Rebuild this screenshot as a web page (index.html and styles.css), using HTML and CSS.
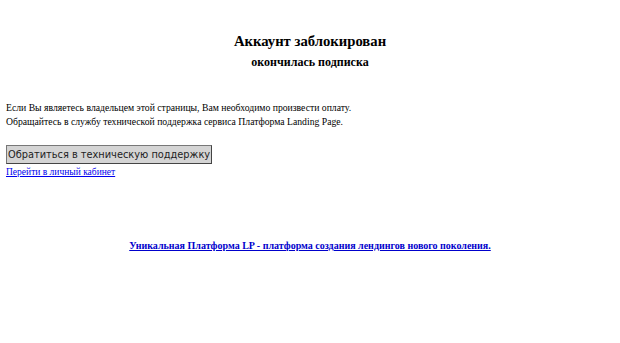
FILE: index.html
```html
<!DOCTYPE html>
<html>
<head>
<meta charset="utf-8">
<link rel="stylesheet" href="styles.css">
</head>
<body>
<div class="page">
  <h1 class="title">Аккаунт заблокирован</h1>
  <h2 class="subtitle">окончилась подписка</h2>
  <p class="text">Если Вы являетесь владельцем этой страницы, Вам необходимо произвести оплату.<br>Обращайтесь в службу технической поддержка сервиса Платформа Landing Page.</p>
  <button class="btn" type="button">Обратиться в техническую поддержку</button>
  <a class="cabinet" href="#">Перейти в личный кабинет</a>
  <p class="footer"><a href="#">Уникальная Платформа LP - платформа создания лендингов нового поколения.</a></p>
</div>
</body>
</html>
```
FILE: styles.css
```css
html, body {
  margin: 0;
  padding: 0;
  background: #fff;
}
.page {
  padding: 32px 6px 0;
  font-family: "Liberation Serif", "DejaVu Serif", serif;
  color: #000;
}
.title {
  margin: 0;
  text-align: center;
  font-size: 14.7px;
  line-height: 18px;
  font-weight: bold;
}
.subtitle {
  margin: 5px 0 0;
  text-align: center;
  font-size: 12px;
  line-height: 14px;
  font-weight: bold;
}
.text {
  margin: 32px 0 0;
  font-size: 9.7px;
  line-height: 14px;
}
.btn {
  display: block;
  margin: 16px 0 0;
  height: 19px;
  padding: 0 1px;
  font-family: "DejaVu Sans", sans-serif;
  font-size: 9.8px;
  color: #222;
  background: #d4d4d4;
  border: 1px solid #777;
  border-right-color: #444;
  border-bottom-color: #444;
}
.cabinet {
  display: block;
  margin-top: 2px;
  font-size: 9.5px;
  line-height: 12px;
  color: #0000ee;
}
.footer {
  margin: 62px 0 0;
  text-align: center;
  font-size: 10px;
  line-height: 12px;
  font-weight: bold;
}
.footer a {
  color: #0000cc;
}
```
